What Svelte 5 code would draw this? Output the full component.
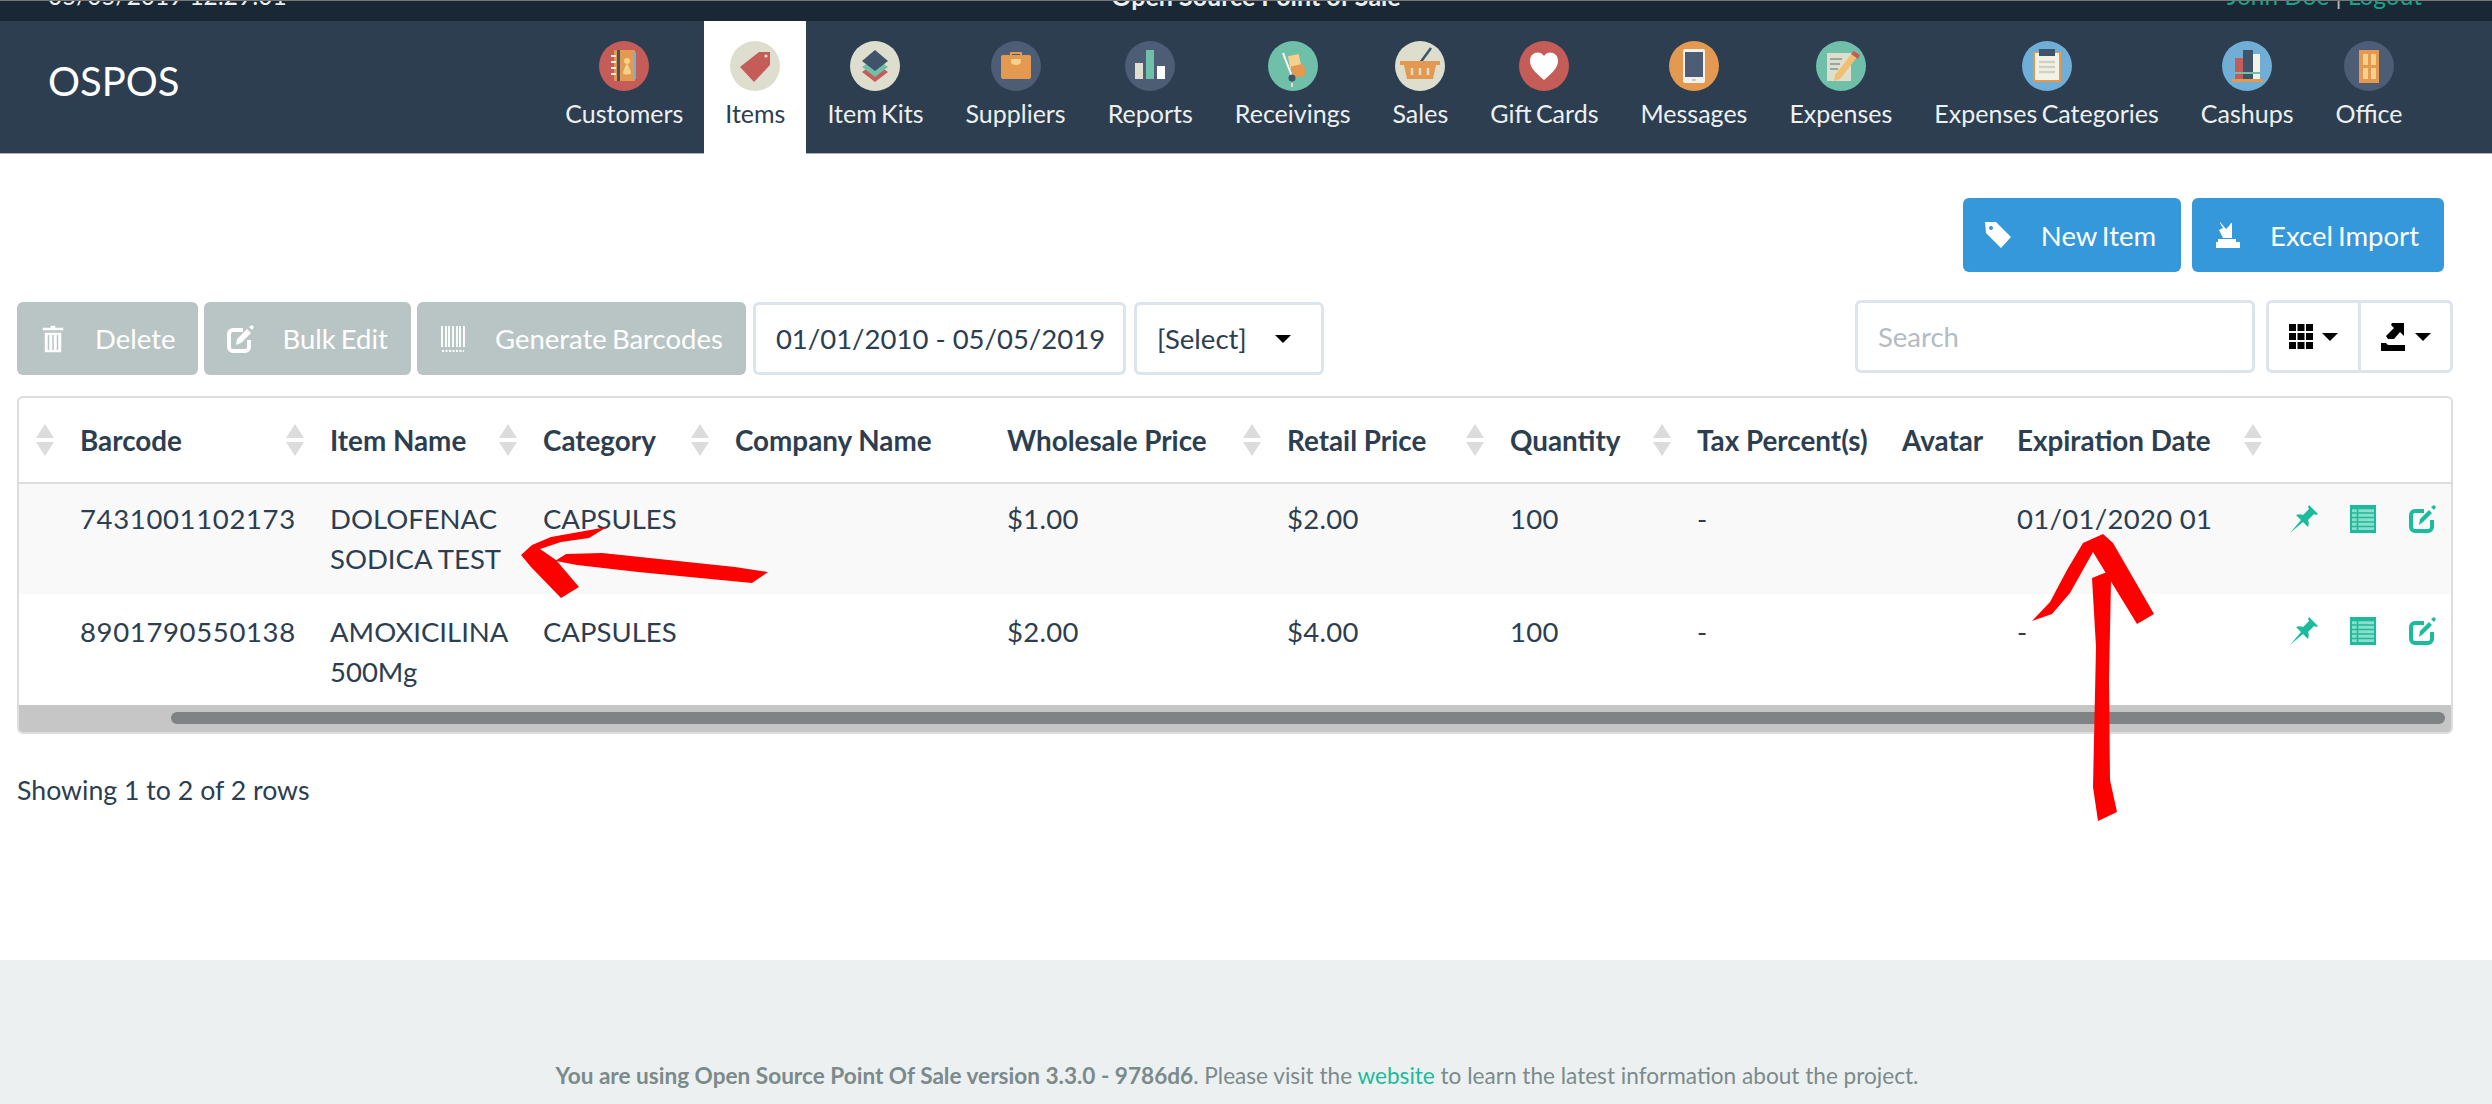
<script>
    const navItems = [
        { label: "Customers", bg: "#c45c58", art: `<rect x="15" y="9" width="21" height="31" rx="1" fill="#e3994f"/><rect x="18" y="9" width="3" height="31" fill="#3f5468"/><rect x="35" y="11" width="2" height="27" fill="#6fb0d6"/><path d="M12 14h5v2h-5zM12 20h5v2h-5zM12 26h5v2h-5zM12 32h5v2h-5z" fill="#eee"/><circle cx="28" cy="20" r="3" fill="#f6d08c"/><path d="M28 22c-2 4-4 8-4 10 0 2 8 2 8 0 0-2-2-6-4-10z" fill="#f6d08c"/>` },
        { label: "Items", bg: "#dedecf", active: true, art: `<path d="M10 26 29 11h11v13L24 41z" fill="#c45c58"/><circle cx="36" cy="15" r="1.6" fill="#dedecf"/>` },
        { label: "Item Kits", bg: "#dedecf", art: `<path d="M25 22 38 31 25 41 12 31z" fill="#c45c58"/><path d="M25 17 38 26 25 36 12 26z" fill="#70bfa9"/><path d="M25 9 38 20 25 30 12 20z" fill="#3f5468"/>` },
        { label: "Suppliers", bg: "#4d5d75", art: `<path d="M19 15v-4h12v4h-2v-2h-8v2z" fill="#e3994f"/><rect x="10" y="14" width="30" height="24" rx="2" fill="#e3994f"/><path d="M20 18h10v3c0 4-10 4-10 0z" fill="#f6d08c"/>` },
        { label: "Reports", bg: "#4d5d75", art: `<rect x="10" y="22" width="8" height="16" fill="#dedecf"/><rect x="21" y="9" width="8" height="29" fill="#70bfa9"/><rect x="32" y="25" width="8" height="13" fill="#fff"/>` },
        { label: "Receivings", bg: "#70bfa9", art: `<path d="M15 12 25 38" stroke="#fff" stroke-width="2" fill="none"/><rect x="21" y="14" width="11" height="13" fill="#f6d08c" transform="rotate(-12 26 20)"/><rect x="24" y="24" width="13" height="12" fill="#e3994f" transform="rotate(-12 30 30)"/><circle cx="24" cy="37" r="3.5" fill="#3f5468"/><path d="M24 42v4" stroke="#dedecf" stroke-width="2"/>` },
        { label: "Sales", bg: "#dedecf", art: `<path d="M25 22 36 7" stroke="#3f5468" stroke-width="2.5"/><rect x="5" y="20" width="40" height="4" fill="#e3994f"/><path d="M9 24h32l-3 14H12z" fill="#e3994f"/><path d="M17 27v7M25 27v7M33 27v7" stroke="#dedecf" stroke-width="2.5"/>` },
        { label: "Gift Cards", bg: "#c45c58", art: `<path d="M25 39C17 32 11 27 11 20c0-9 10-11 14-5 4-6 14-4 14 5 0 7-6 12-14 19z" fill="#fff"/>` },
        { label: "Messages", bg: "#e3994f", art: `<rect x="14" y="8" width="22" height="34" rx="2" fill="#f2f2ec"/><rect x="16" y="11" width="18" height="25" fill="#4d5d75"/><rect x="23" y="38" width="4" height="2" fill="#ccc"/>` },
        { label: "Expenses", bg: "#70bfa9", art: `<rect x="11" y="12" width="24" height="28" fill="#dedecf"/><path d="M14 18h12M14 23h10M14 28h8" stroke="#9aa79f" stroke-width="2"/><path d="M19 34 37 11l5 4-18 23-6 2z" fill="#f0c070"/><path d="M35 13l3-3 6 4-2 4z" fill="#c45c58"/>` },
        { label: "Expenses Categories", bg: "#70aed6", art: `<rect x="11" y="11" width="28" height="30" fill="#e3994f"/><rect x="13" y="12" width="24" height="27" fill="#f2f2e6"/><rect x="17" y="8" width="16" height="7" fill="#3f5468"/><path d="M17 21h16M17 26h16M17 31h16" stroke="#cfd3c4" stroke-width="2.5"/>` },
        { label: "Cashups", bg: "#70aed6", art: `<rect x="13" y="17" width="8" height="22" fill="#c45c58"/><rect x="21" y="9" width="10" height="30" fill="#3f5468"/><rect x="31" y="13" width="7" height="26" fill="#f2f2e6"/><path d="M13 32h25" stroke="#70bfa9" stroke-width="2"/><rect x="10" y="38" width="31" height="3" fill="#e3994f"/>` },
        { label: "Office", bg: "#4d5d75", art: `<rect x="15" y="9" width="20" height="33" fill="#e3994f"/><rect x="19" y="13" width="5" height="11" fill="#f6d08c"/><rect x="27" y="13" width="5" height="11" fill="#f6d08c"/><rect x="19" y="27" width="5" height="11" fill="#f6d08c"/><rect x="27" y="27" width="5" height="11" fill="#f6d08c"/>` }
    ];

    const columns = [
        { label: "", w: 53, sort: true },
        { label: "Barcode", w: 250, sort: true },
        { label: "Item Name", w: 213, sort: true },
        { label: "Category", w: 192, sort: true },
        { label: "Company Name", w: 272 },
        { label: "Wholesale Price", w: 280, sort: true },
        { label: "Retail Price", w: 223, sort: true },
        { label: "Quantity", w: 187, sort: true },
        { label: "Tax Percent(s)", w: 205 },
        { label: "Avatar", w: 115 },
        { label: "Expiration Date", w: 271, sort: true },
        { label: "", w: 60 },
        { label: "", w: 60 },
        { label: "", w: 55 }
    ];

    const rows = [
        { code: "7431001102173", name: ["DOLOFENAC", "SODICA TEST"], cat: "CAPSULES", sale: "$1.00", retail: "$2.00", qty: "100", tax: "-", exp: "01/01/2020 01" },
        { code: "8901790550138", name: ["AMOXICILINA", "500Mg"], cat: "CAPSULES", sale: "$2.00", retail: "$4.00", qty: "100", tax: "-", exp: "-" }
    ];
</script>

<div class="topbar">
    <div class="topbar-row">
        <span class="clock">05/05/2019 12:29:01</span>
        <b>Open Source Point of Sale</b>
        <span class="user"><a href="#top">John Doe</a> | <a href="#top">Logout</a></span>
    </div>
</div>

<header class="navbar">
    <div class="brand">OSPOS</div>
    <nav>
        {#each navItems as item}
            <a href="#top" class="nav-item" class:active={item.active}>
                <svg width="50" height="50" viewBox="0 0 50 50">
                    <circle cx="25" cy="25" r="25" fill={item.bg} />
                    {@html item.art}
                </svg>
                <span>{item.label}</span>
            </a>
        {/each}
    </nav>
</header>

<main>
    <div class="actions">
        <button class="btn primary">
            <svg class="ico" viewBox="0 0 28 28"><path d="M0 1h11l15 15-10 11L1 12zM6 5a2 2 0 1 0 .01 0z" fill="#fff" fill-rule="evenodd" /></svg>
            New Item
        </button>
        <button class="btn primary">
            <svg class="ico" viewBox="0 0 28 28"><path d="M6 1l6 7 3-3 2-3h1v15H9L5 9l4-2-3-5zM4 18h18v3h4v6H2v-6h2z" fill="#fff" /></svg>
            Excel Import
        </button>
    </div>

    <div class="toolbar">
        <button class="btn muted">
            <svg class="ico" viewBox="0 0 28 28"><path d="M11 0h6v2h8v4H3V2h8zM5 7h18v21H5zM9.500 10v15M14 10v15M18.500 10v15" fill="#fff" stroke="#b9c5c4" stroke-width="1.500" /></svg>
            Delete
        </button>
        <button class="btn muted">
            <svg class="ico" viewBox="0 0 28 28"><path d="M23 15v7a4 4 0 0 1-4 4H7a4 4 0 0 1-4-4V9a4 4 0 0 1 4-4h10" fill="none" stroke="#fff" stroke-width="4" /><path d="M10 20l1-6 10-10 4 4-10 10zM26 0l2 2-2 3-3-3z" fill="#fff" /></svg>
            Bulk Edit
        </button>
        <button class="btn muted">
            <svg class="ico" viewBox="0 0 28 28"><path d="M3 1v21M7 1v21M10 1v21M14 1v21M18 1v21M21 1v21M25 1v21" stroke="#fff" stroke-width="1.800" /><path d="M3 26h22" stroke="#fff" stroke-width="2" stroke-dasharray="2 1.500" /></svg>
            Generate Barcodes
        </button>
        <div class="field date">01/01/2010 - 05/05/2019</div>
        <div class="field select">[Select] <i class="caret"></i></div>
        <div class="search">Search</div>
        <div class="tools">
            <div class="tool">
                <svg width="24" height="25" viewBox="0 0 24 25"><path d="M0 0h7v7H0zM8.500 0h7v7h-7zM17 0h7v7h-7zM0 9h7v7H0zM8.500 9h7v7h-7zM17 9h7v7h-7zM0 18h7v7H0zM8.500 18h7v7h-7zM17 18h7v7h-7z" /></svg>
                <i class="caret small"></i>
            </div>
            <div class="tool">
                <svg width="26" height="28" viewBox="0 0 26 28"><path d="M12 0h12v13l-4-4-6 7H8l-2-3 8-8-3-3zM1 20h5l2 2h17v6H1z" /></svg>
                <i class="caret small"></i>
            </div>
        </div>
    </div>

    <div class="table-wrap">
        <table>
            <colgroup>
                {#each columns as col}<col style="width: {col.w}px" />{/each}
            </colgroup>
            <thead>
                <tr>
                    {#each columns as col}
                        <th>
                            <div class="th-inner">
                                <span>{col.label}</span>
                                {#if col.sort}<i class="sort"></i>{/if}
                            </div>
                        </th>
                    {/each}
                </tr>
            </thead>
            <tbody>
                {#each rows as row}
                    <tr>
                        <td></td>
                        <td class="code">{row.code}</td>
                        <td>{row.name[0]}<br />{row.name[1]}</td>
                        <td>{row.cat}</td>
                        <td></td>
                        <td class="num">{row.sale}</td>
                        <td class="num">{row.retail}</td>
                        <td class="num">{row.qty}</td>
                        <td>{row.tax}</td>
                        <td></td>
                        <td class="num">{row.exp}</td>
                        <td class="act">
                            <svg width="28" height="28" viewBox="0 0 28 28"><path d="M19 0l9 9-2 1-2-1-6 6c1 2 1 5 0 7l-5-5L0 28l11-13-5-5c2-1 5-1 7 0l6-6-1-2z" fill="#1abc9c" /></svg>
                        </td>
                        <td class="act">
                            <svg width="26" height="28" viewBox="0 0 26 28"><rect width="26" height="28" fill="#1abc9c" /><rect x="2" y="3" width="22" height="22" fill="#8fdcca" /><path d="M2 3.500h22M2 8h22M2 12.500h22M2 17h22M2 21.500h22M7.500 3v22" stroke="#1abc9c" stroke-width="1.600" /></svg>
                        </td>
                        <td class="act edit">
                            <svg width="28" height="28" viewBox="0 0 28 28"><path d="M24 15v7a4 4 0 0 1-4 4H7a4 4 0 0 1-4-4V10a4 4 0 0 1 4-4h9" fill="none" stroke="#1abc9c" stroke-width="4" /><path d="M11 20l1-6 9-9 3 3-9 9zM26 0l2 2-2 3-3-3z" fill="#1abc9c" /></svg>
                        </td>
                    </tr>
                {/each}
            </tbody>
        </table>
        <div class="scrollbar"><div class="thumb"></div></div>
    </div>

    <p class="count">Showing 1 to 2 of 2 rows</p>
</main>

<footer>
    <b>You are using Open Source Point Of Sale version 3.3.0 - 9786d6</b>. Please visit the <a href="#top">website</a> to learn the latest information about the project.
</footer>

<!-- red hand-drawn annotations sitting on top of the screenshot -->
<svg class="marks" width="2492" height="1104" viewBox="0 0 2492 1104">
    <path fill="#f00" d="M768 572 752 583 638 572 577 565 556 561 555 561 566 554 602 553 735 567zM521 555 532 545 551 537 607 527 589 538 561 542 540 549 556 560 579 587 561 598 531 567z" />
    <path fill="#f00" d="M2092 578 2107 572 2111 580 2109 680 2110 780 2117 812 2098 821 2093 787 2096 647zM2032 621 2050 602 2067 570 2083 543 2103 534 2113 543 2154 614 2137 624 2093 552 2070 593 2052 614z" />
</svg>

<style>
    :global(body) {
        font-family: Lato, "Liberation Sans", sans-serif;
        color: #2c3e50;
        background: #fff;
        position: relative;
        height: 1104px;
        overflow: hidden;
    }

    a {
        color: inherit;
        text-decoration: none;
    }

    .topbar {
        height: 20px;
        overflow: hidden;
        background: #1a2836;
        border-top: 1px solid #777;
        color: #ecf0f1;
        font-size: 25px;
        line-height: 30px;
    }

    .topbar-row {
        display: grid;
        grid-template-columns: 1fr auto 1fr;
        margin-top: -20px;
        padding: 0 28px 0 48px;
    }

    .clock {
        font-size: 24.4px;
    }

    .user {
        text-align: right;
        padding-right: 42px;
        color: #bbb;
        font-size: 24.4px;
    }

    .user a {
        color: #15a589;
    }

    .navbar {
        height: 132px;
        display: flex;
        justify-content: space-between;
        background: #2c3e50;
        border-bottom: 1px solid #a9b0b8;
        padding: 0 68.5px 0 48px;
    }

    .brand {
        font-size: 40px;
        line-height: 120px;
        color: #fff;
    }

    nav {
        display: flex;
    }

    .nav-item {
        display: flex;
        flex-direction: column;
        align-items: center;
        height: 133px;
        padding: 20px 21px 0;
        box-sizing: border-box;
        color: #ecf0f1;
        font-size: 25px;
        word-spacing: -2px;
        white-space: nowrap;
    }

    .nav-item span {
        margin-top: 7px;
    }

    .nav-item.active {
        background: #fff;
        color: #2c3e50;
    }

    main {
        padding: 44px 39px 0 17px;
    }

    .actions {
        display: flex;
        justify-content: flex-end;
        gap: 11px;
        padding-right: 9px;
    }

    .btn {
        display: flex;
        align-items: center;
        border: 0;
        border-radius: 6px;
        padding: 0 23px 0 22px;
        color: #fff;
        font: inherit;
        font-size: 27.5px;
        word-spacing: -2px;
        white-space: nowrap;
    }

    .ico {
        width: 28px;
        height: 28px;
        margin-right: 28px;
    }

    .primary {
        height: 74px;
        padding-right: 25px;
        background: #3498db;
    }

    .toolbar {
        display: flex;
        align-items: flex-start;
        margin-top: 30px;
        gap: 6px;
    }

    .muted {
        height: 73px;
        background: #b9c5c4;
    }

    .field, .search, .tools {
        box-sizing: border-box;
        height: 73px;
        border: 3px solid #dce4ec;
        border-radius: 6px;
        background: #fff;
        font-size: 27.5px;
    }

    .field {
        display: flex;
        align-items: center;
        padding: 0 20px;
        white-space: nowrap;
    }

    .date {
        width: 373px;
        margin-left: 1px;
    }

    .select {
        gap: 28px;
        margin-left: 2px;
        width: 190px;
    }

    .search {
        display: flex;
        align-items: center;
        width: 400px;
        margin-left: auto;
        margin-top: -2px;
        padding-left: 20px;
        color: #b4bcc2;
    }

    .tools {
        display: flex;
        width: 187px;
        margin-left: 5px;
        margin-top: -2px;
    }

    .tool {
        flex: 1;
        display: flex;
        align-items: center;
        justify-content: center;
        gap: 9px;
    }

    .tool + .tool {
        border-left: 3px solid #dce4ec;
    }

    .caret {
        width: 0;
        height: 0;
        border-left: 8px solid transparent;
        border-right: 8px solid transparent;
        border-top: 8px solid #000;
    }

    .table-wrap {
        box-sizing: border-box;
        margin-top: 21px;
        height: 338px;
        border: 2px solid #ddd;
        border-radius: 6px;
        overflow: hidden;
    }

    table {
        width: 2436px;
        table-layout: fixed;
        border-collapse: collapse;
        font-size: 27.5px;
    }

    th {
        height: 84px;
        padding: 0;
        border-bottom: 2px solid #ddd;
        font-size: 27.8px;
        font-weight: 700;
        text-align: left;
    }

    .th-inner {
        display: flex;
        align-items: center;
        justify-content: space-between;
        padding: 0 18px 0 8px;
        white-space: nowrap;
    }

    .sort {
        position: relative;
        width: 18px;
        height: 32px;
        flex: none;
    }

    .sort::before, .sort::after {
        content: "";
        position: absolute;
        left: 0;
        border-left: 9px solid transparent;
        border-right: 9px solid transparent;
    }

    .sort::before {
        top: 0;
        border-bottom: 14px solid #dcdcdc;
    }

    .sort::after {
        bottom: 0;
        border-top: 14px solid #dcdcdc;
    }

    td {
        height: 111px;
        box-sizing: border-box;
        padding: 15px 0 0 8px;
        vertical-align: top;
        line-height: 40px;
        white-space: nowrap;
    }

    tbody tr:first-child {
        background: #f9f9f9;
    }

    tbody tr:last-child td {
        padding-top: 18px;
    }

    .code {
        letter-spacing: 0.65px;
    }

    .num {
        letter-spacing: 0.3px;
    }

    td.act, tbody tr:last-child td.act {
        line-height: 0;
        padding-left: 10px;
    }

    td.edit, tbody tr:last-child td.edit {
        padding-left: 8px;
    }

    td.act {
        padding-top: 21px;
    }

    tbody tr:last-child td.act {
        padding-top: 23px;
    }

    .scrollbar {
        height: 28px;
        padding-top: 7px;
        box-sizing: border-box;
        background: #c6c6c6;
    }

    .thumb {
        height: 12px;
        margin: 0 6px 0 152px;
        border-radius: 6px;
        background: #7f8383;
    }

    .count {
        margin: 40px 0 0;
        font-size: 26.7px;
        line-height: 32px;
    }

    footer {
        position: absolute;
        left: 0;
        right: 0;
        top: 960px;
        height: 144px;
        box-sizing: border-box;
        padding-top: 102px;
        padding-right: 18px;
        background: #ecf0f1;
        color: #7b8a8b;
        text-align: center;
        font-size: 22.6px;
        line-height: 28px;
    }

    footer a {
        color: #18bc9c;
    }

    .marks {
        position: absolute;
        left: 0;
        top: 0;
        pointer-events: none;
    }
</style>
